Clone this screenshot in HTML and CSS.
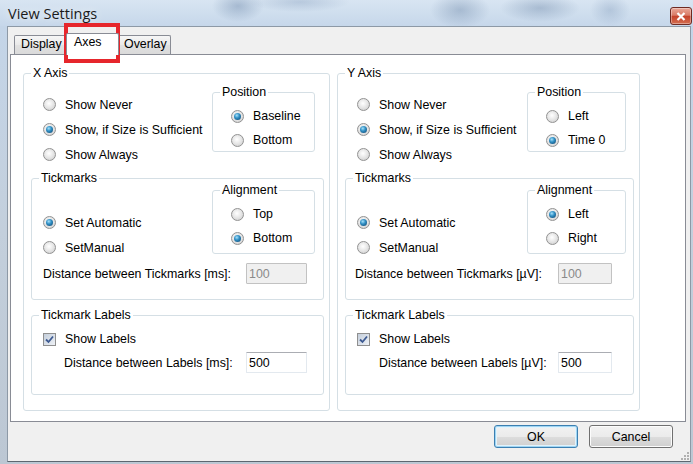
FILE: index.html
```html
<!DOCTYPE html>
<html>
  <head>
    <title>View Settings</title>
    <link rel="stylesheet" href="styles.css">
  </head>
  <body>
    <div class="window">
      <div class="titlebar">
        <span class="title">View Settings</span>
        <button class="close-button">
          <svg width="10" height="9" viewBox="0 0 10 9"><path d="M1.5 1 L8.5 8 M8.5 1 L1.5 8" stroke="#fff" stroke-width="2.2" /></svg>
        </button>
      </div>

      <div class="client">
        <div class="tabs">
          <div class="tab">Display</div>
          <div class="tab selected">Axes</div>
          <div class="tab">Overlay</div>
        </div>

        <div class="tab-page">
          <!-- X axis -->
          <fieldset class="group axis x-axis">
            <legend>X Axis</legend>
            <div class="top-row">
              <div class="options">
                <label class="option"><span class="radio"></span>Show Never</label>
                <label class="option"><span class="radio checked"></span>Show, if Size is Sufficient</label>
                <label class="option"><span class="radio"></span>Show Always</label>
              </div>
              <fieldset class="group small position">
                <legend>Position</legend>
                <label class="option"><span class="radio checked"></span>Baseline</label>
                <label class="option"><span class="radio"></span>Bottom</label>
              </fieldset>
            </div>

            <fieldset class="group ticks">
              <legend>Tickmarks</legend>
              <div class="top-row">
                <div class="options">
                  <label class="option"><span class="radio checked"></span>Set Automatic</label>
                  <label class="option"><span class="radio"></span>SetManual</label>
                </div>
                <fieldset class="group small alignment">
                  <legend>Alignment</legend>
                  <label class="option"><span class="radio"></span>Top</label>
                  <label class="option"><span class="radio checked"></span>Bottom</label>
                </fieldset>
              </div>
              <div class="field-row">
                <span>Distance between Tickmarks [ms]:</span>
                <input class="text-box" value="100" disabled>
              </div>
            </fieldset>

            <fieldset class="group labels">
              <legend>Tickmark Labels</legend>
              <label class="option check-row">
                <span class="checkbox"><svg width="11" height="11" viewBox="0 0 11 11"><path d="M2 5.5 L4.5 8 L9 2.5" fill="none" stroke="#3d5a92" stroke-width="1.8" /></svg></span>
                Show Labels
              </label>
              <div class="field-row">
                <span>Distance between Labels [ms]:</span>
                <input class="text-box" value="500">
              </div>
            </fieldset>
          </fieldset>

          <!-- Y axis -->
          <fieldset class="group axis y-axis">
            <legend>Y Axis</legend>
            <div class="top-row">
              <div class="options">
                <label class="option"><span class="radio"></span>Show Never</label>
                <label class="option"><span class="radio checked"></span>Show, if Size is Sufficient</label>
                <label class="option"><span class="radio"></span>Show Always</label>
              </div>
              <fieldset class="group small position">
                <legend>Position</legend>
                <label class="option"><span class="radio"></span>Left</label>
                <label class="option"><span class="radio checked"></span>Time 0</label>
              </fieldset>
            </div>

            <fieldset class="group ticks">
              <legend>Tickmarks</legend>
              <div class="top-row">
                <div class="options">
                  <label class="option"><span class="radio checked"></span>Set Automatic</label>
                  <label class="option"><span class="radio"></span>SetManual</label>
                </div>
                <fieldset class="group small alignment">
                  <legend>Alignment</legend>
                  <label class="option"><span class="radio checked"></span>Left</label>
                  <label class="option"><span class="radio"></span>Right</label>
                </fieldset>
              </div>
              <div class="field-row">
                <span>Distance between Tickmarks [µV]:</span>
                <input class="text-box" value="100" disabled>
              </div>
            </fieldset>

            <fieldset class="group labels">
              <legend>Tickmark Labels</legend>
              <label class="option check-row">
                <span class="checkbox"><svg width="11" height="11" viewBox="0 0 11 11"><path d="M2 5.5 L4.5 8 L9 2.5" fill="none" stroke="#3d5a92" stroke-width="1.8" /></svg></span>
                Show Labels
              </label>
              <div class="field-row">
                <span>Distance between Labels [µV]:</span>
                <input class="text-box" value="500">
              </div>
            </fieldset>
          </fieldset>
        </div>

        <div class="buttons">
          <button class="button default">OK</button>
          <button class="button">Cancel</button>
        </div>

        <svg class="grip" width="10" height="10" viewBox="0 0 10 10">
          <rect x="8" y="2" width="2" height="2" fill="#b0b0b0" />
          <rect x="5" y="5" width="2" height="2" fill="#b0b0b0" />
          <rect x="8" y="5" width="2" height="2" fill="#b0b0b0" />
          <rect x="2" y="8" width="2" height="2" fill="#b0b0b0" />
          <rect x="5" y="8" width="2" height="2" fill="#b0b0b0" />
          <rect x="8" y="8" width="2" height="2" fill="#b0b0b0" />
        </svg>
      </div>
    </div>

    <div class="highlight"></div>
  </body>
</html>
```

FILE: styles.css
```css
* {
  box-sizing: border-box;
}

body {
  margin: 0;
  width: 693px;
  height: 464px;
  overflow: hidden;
  position: relative;
  font-family: "Liberation Sans", Arial, sans-serif;
  font-size: 12.4px;
  color: #000;
  background: #c3cfdc;
}

.window {
  display: flex;
  flex-direction: column;
  height: 464px;
  background: linear-gradient(#d5e2f0, #c4d5e8 26px, #c3cfdc 50%, #bcc7d3);
}

/* glass title bar */
.titlebar {
  height: 26px;
  display: flex;
  justify-content: space-between;
  align-items: flex-start;
  padding-left: 8px;
  background:
    radial-gradient(ellipse 26px 16px at 238px 6px, rgba(80, 110, 150, 0.35), transparent),
    radial-gradient(ellipse 50px 10px at 300px 2px, rgba(90, 120, 160, 0.25), transparent),
    radial-gradient(ellipse 30px 18px at 460px 10px, rgba(70, 100, 140, 0.3), transparent),
    radial-gradient(ellipse 40px 14px at 540px 8px, rgba(70, 100, 140, 0.3), transparent),
    radial-gradient(ellipse 20px 16px at 610px 10px, rgba(90, 120, 160, 0.25), transparent),
    linear-gradient(#d8e5f2, #c6d7ea);
}

.title {
  font-family: "Open Sans", "Noto Sans", sans-serif;
  font-size: 14.5px;
  line-height: 20px;
  margin-top: 4px;
  color: #1b1b1b;
  text-shadow: 0 0 8px rgba(255, 255, 255, 0.9);
}

.close-button {
  width: 22px;
  height: 18px;
  margin: 7px 1px 0 0;
  padding: 0;
  display: flex;
  align-items: center;
  justify-content: center;
  border: 1px solid #6e2a22;
  border-radius: 3px;
  background: linear-gradient(#eaa898, #d97c68 45%, #c5432c 52%, #d46e4f);
  box-shadow: inset 0 0 0 1px rgba(255, 255, 255, 0.35);
}

.client {
  flex: 1;
  margin: 0 2px 2px 7px;
  padding: 0 4px 0 2px;
  border: 1px solid #8d99a6;
  border-bottom-color: #5d6670;
  background: #f0f0f0;
  display: flex;
  flex-direction: column;
  position: relative;
}

/* tabs */
.tabs {
  display: flex;
  align-items: flex-end;
  height: 27px;
  padding-left: 4px;
}

.tab {
  width: 54px;
  height: 19px;
  padding-left: 6px;
  line-height: 17px;
  border: 1px solid #898c95;
  border-bottom: none;
  border-radius: 2px 2px 0 0;
  background: linear-gradient(#f6f6f6, #e9e9e9 50%, #e1e1e1 51%, #dadada);
}

.tab.selected {
  width: 53px;
  height: 22px;
  margin: 0 -2px -1px;
  padding-left: 7px;
  background: #fff;
  position: relative;
  z-index: 1;
}

.tab-page {
  height: 368px;
  border: 1px solid #898c95;
  background: #fff;
  padding: 11px 0 0 12px;
  display: flex;
  align-items: flex-start;
  gap: 7px;
}

/* group boxes */
.group {
  margin: 0;
  padding: 0;
  min-width: 0;
  border: 1px solid #d5dfe5;
  border-radius: 3px;
}

.group legend {
  margin-left: 7px;
  padding: 0 2px;
  line-height: 14px;
}

.axis {
  padding: 5px 0 15px;
}

.x-axis {
  width: 307px;
}

.y-axis {
  width: 303px;
}

.top-row {
  display: flex;
  justify-content: space-between;
  align-items: flex-start;
}

.axis > .top-row {
  padding: 0 14px 0 19px;
}

.y-axis > .top-row {
  padding-right: 13px;
}

.options {
  margin-top: 7px;
}

.options .option {
  height: 25px;
}

.option {
  display: flex;
  align-items: center;
  gap: 9px;
  white-space: nowrap;
}

.small {
  padding: 7px 0 1px;
  width: 103px;
}

.y-axis .small {
  width: 99px;
}

.small .option {
  height: 20px;
  margin-left: 18px;
}

.small .option + .option {
  margin-top: 4px;
}

.alignment {
  margin: -2px 8px 0 0;
  padding-bottom: 5px;
}

.y-axis .alignment {
  margin-right: 7px;
}

.ticks {
  margin: 4px 0 0 7px;
  padding: 0 0 15px;
  width: 293px;
}

.ticks .options {
  margin: 25px 0 0 11px;
}

.labels {
  margin: 8px 0 0 7px;
  padding: 7px 0 21px;
  width: 293px;
}

.y-axis .ticks,
.y-axis .labels {
  width: 289px;
}

.check-row {
  height: 20px;
  padding-left: 11px;
}

.field-row {
  display: flex;
  justify-content: space-between;
  align-items: center;
  margin-top: 3px;
  padding: 0 16px 0 11px;
}

.labels .field-row {
  padding-left: 32px;
}

.y-axis .field-row {
  padding: 0 21px 0 9px;
}

.y-axis .labels .field-row {
  padding-left: 33px;
}

.text-box {
  width: 61px;
  height: 21px;
  padding: 0 2px;
  font: inherit;
  color: #000;
  background: #fff;
  border: 1px solid #e3e9ef;
  border-top-color: #abadb3;
  border-radius: 1px;
  outline: none;
}

.text-box:disabled {
  color: #8a8a8a;
  background: #f0f0f0;
  border-color: #c2c2c2;
}

.y-axis .text-box {
  width: 54px;
}

/* radio and checkbox glyphs */
.radio {
  flex: none;
  width: 13px;
  height: 13px;
  border-radius: 50%;
  border: 1px solid #929292;
  background: radial-gradient(circle at 45% 40%, #ffffff, #e8e8e8 45%, #c8c8c8);
  display: flex;
  align-items: center;
  justify-content: center;
}

.radio.checked::after {
  content: "";
  width: 7px;
  height: 7px;
  border-radius: 50%;
  background: radial-gradient(circle at 40% 35%, #a6e1fa, #3291c6 40%, #14537f 85%);
}

.checkbox {
  flex: none;
  width: 13px;
  height: 13px;
  border: 1px solid #8f8f8f;
  background: linear-gradient(135deg, #c4cedb, #eef1f6);
  display: flex;
  align-items: center;
  justify-content: center;
}

/* dialog buttons */
.buttons {
  display: flex;
  justify-content: flex-end;
  gap: 11px;
  margin-top: 3px;
  padding-right: 13px;
}

.button {
  width: 84px;
  height: 23px;
  padding: 0;
  font: inherit;
  color: #000;
  border: 1px solid #707070;
  border-radius: 3px;
  background: linear-gradient(#f2f2f2, #ebebeb 50%, #dddddd 51%, #cfcfcf);
  box-shadow: inset 0 0 0 1px #fcfcfc;
}

.button.default {
  border-color: #3c7fb1;
  box-shadow: inset 0 0 0 1px #9fd5f3, inset 0 0 0 2px #e2f3fc;
}

.grip {
  position: absolute;
  right: 1px;
  bottom: 1px;
}

/* red annotation frame around the active tab */
.highlight {
  position: absolute;
  left: 64px;
  top: 23px;
  width: 56px;
  height: 40px;
  border: 4px solid #e6262c;
}
```
